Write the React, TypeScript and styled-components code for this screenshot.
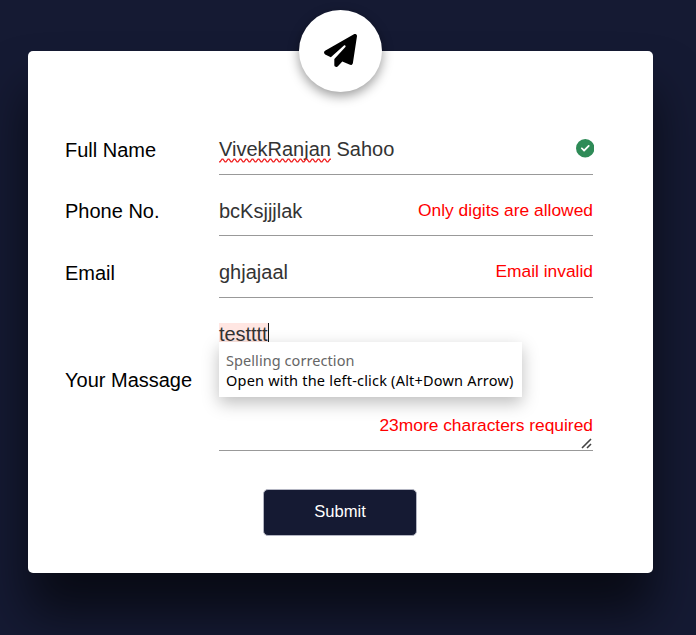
import React from "react";
import styled, { createGlobalStyle } from "styled-components";
import { FaCircleCheck, FaPaperPlane } from "react-icons/fa6";

const GlobalStyle = createGlobalStyle`
  *, *::before, *::after { box-sizing: border-box; }
  html { height: 100%; }
  body {
    margin: 0;
    height: 100%;
    overflow: hidden;
    background: #151a33;
    font-family: "Liberation Sans", Arial, sans-serif;
  }
`;

const Page = styled.main`
  height: 635px;
  padding: 51px 43px 0 28px;
  overflow: hidden;
`;

const Card = styled.form`
  position: relative;
  width: 625px;
  height: 522px;
  padding: 74px 60px 0 37px;
  border-radius: 5px;
  background: #fff;
  box-shadow: 0 40px 50px rgba(0, 0, 0, 0.6);
`;

const Emblem = styled.div`
  position: absolute;
  top: -41px;
  left: 271px;
  width: 83px;
  height: 82px;
  padding-bottom: 1px;
  display: flex;
  align-items: center;
  justify-content: center;
  border-radius: 50%;
  background: #fff;
  color: #000;
  box-shadow: 0 4px 12px rgba(0, 0, 0, 0.4);
`;

const Row = styled.div<{ $height: number; $gap: number }>`
  display: grid;
  grid-template-columns: 154px 374px;
  height: ${(p) => p.$height}px;
  margin-bottom: ${(p) => p.$gap}px;
`;

const Label = styled.label<{ $top: number }>`
  padding-top: ${(p) => p.$top}px;
  font-size: 20px;
  line-height: 24px;
  color: #000;
`;

const Field = styled.div<{ $top?: number }>`
  position: relative;
  display: flex;
  justify-content: space-between;
  padding-top: ${(p) => p.$top ?? 12}px;
  border-bottom: 1px solid #999;
`;

const Value = styled.span`
  font-size: 20px;
  line-height: 24px;
  color: #333;
  white-space: pre;
`;

const Misspelled = styled.span`
  position: relative;
  display: inline-block;
`;

const Squiggle = styled.svg`
  position: absolute;
  left: 0;
  top: 21px;
`;

const ErrorText = styled.span`
  font-size: 17.4px;
  line-height: 23px;
  color: #f00;
  white-space: nowrap;
`;

const Valid = styled.span`
  height: 18px;
  margin: 2px -1px 0 0;
  color: #2e8b57;
  line-height: 0;
`;

const MessageField = styled(Field)`
  flex-direction: column;
  justify-content: flex-start;
`;

const Highlight = styled.span`
  align-self: flex-start;
  height: 20px;
  border-right: 1px solid #111;
  background: #ffe6e2;
  font-size: 20px;
  line-height: 22px;
  letter-spacing: -0.05px;
  color: #333;
`;

const MessageError = styled(ErrorText)`
  align-self: flex-end;
  margin-top: 71px;
`;

const ResizeGrip = styled.svg`
  position: absolute;
  right: 1px;
  bottom: 1px;
`;

const Tooltip = styled.div`
  position: absolute;
  z-index: 1;
  top: 31px;
  left: 0;
  width: 303px;
  height: 55px;
  padding: 8px 7px;
  background: #fff;
  box-shadow: 0 6px 16px rgba(0, 0, 0, 0.26);
  font-family: "Noto Sans", sans-serif;
  line-height: 20px;
  white-space: nowrap;
`;

const TooltipLine = styled.div<{ $muted?: boolean }>`
  color: ${(p) => (p.$muted ? "#666" : "#000")};
  font-size: 14.5px;
  letter-spacing: ${(p) => (p.$muted ? "0.07px" : "0.2px")};
`;

const Submit = styled.button`
  display: block;
  width: 154px;
  height: 47px;
  margin: 38px 0 0 198px;
  padding: 0 0 2px;
  border: 1px solid #b3b5c2;
  border-radius: 5px;
  background: #151a33;
  color: #fff;
  font: 16.6px "Liberation Sans", Arial, sans-serif;
`;

const wavePath =
  "M0 3.8" +
  Array.from({ length: 19 }, () => "l1 0l2 -2.6l1 0l2 2.6").join("");

export default function App() {
  return (
    <>
      <GlobalStyle />
      <Page>
        <Card>
          <Emblem>
            <FaPaperPlane size={33} />
          </Emblem>
          <Row $height={50} $gap={11}>
            <Label $top={13}>Full Name</Label>
            <Field>
              <Value>
                <Misspelled>
                  VivekRanjan
                  <Squiggle width="112" height="5" viewBox="0 0 112 5">
                    <path d={wavePath} fill="none" stroke="#f02020" strokeWidth="1.3" />
                  </Squiggle>
                </Misspelled>
                {" Sahoo"}
              </Value>
              <Valid>
                <FaCircleCheck size={18.5} />
              </Valid>
            </Field>
          </Row>
          <Row $height={50} $gap={12}>
            <Label $top={13}>Phone No.</Label>
            <Field $top={13}>
              <Value>bcKsjjjlak</Value>
              <ErrorText>Only digits are allowed</ErrorText>
            </Field>
          </Row>
          <Row $height={50} $gap={13}>
            <Label $top={13}>Email</Label>
            <Field>
              <Value>ghjajaal</Value>
              <ErrorText>Email invalid</ErrorText>
            </Field>
          </Row>
          <Row $height={140} $gap={0}>
            <Label $top={57}>Your Massage</Label>
            <MessageField>
              <Highlight>testttt</Highlight>
              <Tooltip>
                <TooltipLine $muted>Spelling correction</TooltipLine>
                <TooltipLine>Open with the left-click (Alt+Down Arrow)</TooltipLine>
              </Tooltip>
              <MessageError>23more characters required</MessageError>
              <ResizeGrip width="11" height="11" viewBox="0 0 11 11">
                <path d="M1 10L10 1M6 10L10 6" stroke="#444" strokeWidth="1.6" />
              </ResizeGrip>
            </MessageField>
          </Row>
          <Submit type="button">Submit</Submit>
        </Card>
      </Page>
    </>
  );
}
